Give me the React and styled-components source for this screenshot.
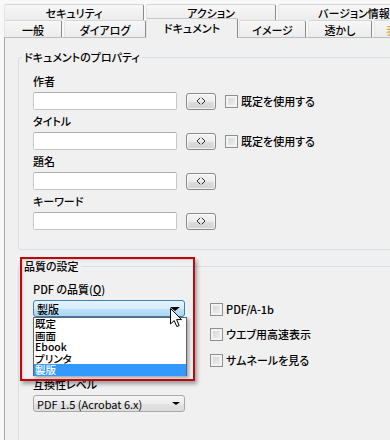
import React from "react";
import styled, { createGlobalStyle, css } from "styled-components";

const FONT = `"Noto Sans CJK JP", "Noto Sans", sans-serif`;

const Global = createGlobalStyle`
  html, body { margin: 0; padding: 0; background: #f0f0f0; }
  #root { width: 390px; height: 440px; overflow: hidden; }
  * { box-sizing: border-box; }
`;

const Window = styled.div`
  width: 390px;
  height: 440px;
  display: flex;
  flex-direction: column;
  background: #f8f8f8;
  font-family: ${FONT};
  font-size: 11px;
  font-weight: 500;
  color: #000;
  font-feature-settings: "palt" 1;
  overflow: hidden;
`;

const TabStrip = styled.div`
  display: flex;
  flex-direction: column;
  padding: 4px 0 0 4px;
`;

const TabRow = styled.div`
  display: flex;
  gap: 2px;
  height: ${(p) => p.$h}px;
`;

const Tab = styled.div`
  flex-shrink: 0;
  width: ${(p) => p.$w}px;
  display: flex;
  align-items: center;
  justify-content: ${(p) => (p.$start ? "flex-start" : "center")};
  white-space: nowrap;
  overflow: hidden;
  border-top: 1px solid #d6d6d6;
  border-left: 1px solid #e4e4e4;
  border-right: 1px solid #8a8a8a;
  border-radius: 2px 2px 0 0;
  background: linear-gradient(#f7f7f7, #ececec);
  line-height: 14px;
  padding-top: 1px;
  ${(p) =>
    p.$active &&
    css`
      position: relative;
      z-index: 2;
      margin: -2px -1px -1px -2px;
      height: calc(100% + 3px);
      background: #f0f0f0;
      border-top: 1px solid #c8c8c8;
      align-items: flex-start;
      padding-top: 2px;
    `}
`;

const FaintGlyph = styled.span`
  color: #e8b450;
  margin-left: 11px;
`;

const Panel = styled.div`
  flex: 1;
  position: relative;
  background: #f0f0f0;
  border-top: 1px solid #bdbdbd;
  border-left: 1px solid #a8a8a8;
  margin-left: 4px;
  padding: 12px 0 0 13px;
  overflow: hidden;
`;

const Group = styled.fieldset`
  margin: ${(p) => (p.$gap ? "9px" : "0")} 0 0 0;
  width: calc(100% + 12px);
  padding: 0;
  min-width: 0;
  border: 1px solid #d5dfe5;
  border-radius: 3px;
  ${(p) => p.$open && css`min-height: 220px;`}
`;

const Legend = styled.legend`
  margin-left: 3px;
  padding: 0 2px;
  line-height: 14px;
  font-size: 11px;
`;

const GroupBody = styled.div`
  padding: ${(p) => p.$top}px 0 16px 14px;
`;

const FieldLabel = styled.div`
  line-height: 16px;
  height: 16px;
  margin-top: ${(p) => p.$mt || 0}px;
`;

const FieldRow = styled.div`
  display: flex;
  align-items: center;
  gap: 9px;
  height: 18px;
  margin: 3px 0;
`;

const TextBox = styled.div`
  width: 144px;
  height: 18px;
  background: #fff;
  border: 1px solid #c4c7cc;
  border-top-color: #abadb3;
  border-radius: 2px;
`;

const SmallButton = styled.div`
  width: 30px;
  height: 17px;
  display: flex;
  align-items: center;
  justify-content: center;
  border: 1px solid #8a8a8a;
  border-radius: 3px;
  background: linear-gradient(#f4f4f4 0%, #ececec 50%, #dedede 51%, #d3d3d3 100%);
  box-shadow: inset 0 0 0 1px rgba(255, 255, 255, 0.7);
`;

const Check = styled.label`
  display: flex;
  align-items: center;
  gap: 3px;
  white-space: nowrap;
  margin-top: ${(p) => p.$mt || 0}px;
`;

const Box = styled.span`
  width: 13px;
  height: 13px;
  flex-shrink: 0;
  border: 1px solid #8e8f8f;
  background: linear-gradient(135deg, #cfd1d4, #f4f4f4);
  box-shadow: inset 0 0 0 2px #f3f3f3;
`;

const QualityLayout = styled.div`
  display: flex;
  align-items: flex-start;
`;

const LeftCol = styled.div`
  display: flex;
  flex-direction: column;
  width: 152px;
`;

const RightCol = styled.div`
  display: flex;
  flex-direction: column;
  margin-left: 25px;
  padding-top: 20px;
`;

const SelectWrap = styled.div`
  position: relative;
  margin-top: 3px;
`;

const Select = styled.div`
  width: 152px;
  height: 17px;
  display: flex;
  align-items: center;
  justify-content: space-between;
  padding: 0 4px 0 3px;
  border-radius: 3px;
  white-space: nowrap;
  ${(p) =>
    p.$active
      ? css`
          border: 1px solid #3c7fb1;
          background: linear-gradient(#e5f4fc 0%, #d6eefb 50%, #bfe3f8 51%, #a9d6f2 100%);
        `
      : css`
          border: 1px solid #a9a9a9;
          background: linear-gradient(#f6f6f6 0%, #ececec 50%, #e2e2e2 51%, #dcdcdc 100%);
          font-weight: 400;
        `}
`;

const Arrow = styled.span`
  width: 0;
  height: 0;
  border-left: ${(p) => p.$s}px solid transparent;
  border-right: ${(p) => p.$s}px solid transparent;
  border-top: ${(p) => p.$s - 1}px solid #000;
`;

const DropList = styled.div`
  position: absolute;
  z-index: 5;
  top: 100%;
  left: 0;
  width: 154px;
  height: 59px;
  background: #fff;
  border: 1px solid #646464;
  box-shadow: 2px 2px 3px rgba(0, 0, 0, 0.3);
  display: flex;
  flex-direction: column;
`;

const Option = styled.div`
  height: ${(p) => (p.$sel ? 12 : 11.5)}px;
  line-height: ${(p) => (p.$sel ? 12 : 11.5)}px;
  font-size: 10.5px;
  padding-left: 1px;
  white-space: nowrap;
  ${(p) =>
    p.$sel &&
    css`
      background: #3399ff;
      color: #fff;
    `}
`;

const Highlight = styled.div`
  position: absolute;
  z-index: 6;
  left: 15px;
  top: 219px;
  width: 175px;
  height: 124px;
  border: 2px solid #c0070d;
  box-shadow: 2px 3px 4px rgba(0, 0, 0, 0.35), inset 1px 1px 2px rgba(0, 0, 0, 0.15);
  pointer-events: none;
`;

const Cursor = styled.svg`
  position: absolute;
  z-index: 7;
  left: 165px;
  top: 270px;
`;

const U = styled.span`
  text-decoration: underline;
`;

const Diamond = () => (
  <svg width="10" height="8" viewBox="0 0 10 8">
    <path d="M4.2 0.8 L1 4 L4.2 7.2 M5.8 0.8 L9 4 L5.8 7.2" fill="none" stroke="#2a2a2a" strokeWidth="1" />
  </svg>
);

const PropertyRow = ({ label, withCheck }) => (
  <>
    <FieldLabel>{label}</FieldLabel>
    <FieldRow>
      <TextBox />
      <SmallButton>
        <Diamond />
      </SmallButton>
      {withCheck && (
        <Check>
          <Box />
          既定を使用する
        </Check>
      )}
    </FieldRow>
  </>
);

export default function App() {
  return (
    <Window>
      <Global />
      <TabStrip>
        <TabRow $h={16}>
          <Tab $w={140}>セキュリティ</Tab>
          <Tab $w={130}>アクション</Tab>
          <Tab $w={152}>バージョン情報</Tab>
        </TabRow>
        <TabRow $h={17}>
          <Tab $w={58}>一般</Tab>
          <Tab $w={82}>ダイアログ</Tab>
          <Tab $w={92} $active>
            ドキュメント
          </Tab>
          <Tab $w={67}>イメージ</Tab>
          <Tab $w={64}>透かし</Tab>
          <Tab $w={60} $start>
            <FaintGlyph>表示</FaintGlyph>
          </Tab>
        </TabRow>
      </TabStrip>
      <Panel>
        <Group>
          <Legend>ドキュメントのプロパティ</Legend>
          <GroupBody $top={9}>
            <PropertyRow label="作者" withCheck />
            <PropertyRow label="タイトル" withCheck />
            <PropertyRow label="題名" />
            <PropertyRow label="キーワード" />
          </GroupBody>
        </Group>
        <Group $gap $open>
          <Legend>品質の設定</Legend>
          <GroupBody $top={8}>
            <QualityLayout>
              <LeftCol>
                <FieldLabel>
                  PDF の品質(<U>Q</U>)
                </FieldLabel>
                <SelectWrap>
                  <Select $active>
                    <span>製版</span>
                    <Arrow $s={5} />
                  </Select>
                  <DropList>
                    <Option>既定</Option>
                    <Option>画面</Option>
                    <Option>Ebook</Option>
                    <Option>プリンタ</Option>
                    <Option $sel>製版</Option>
                  </DropList>
                </SelectWrap>
                <FieldLabel $mt={59}>互換性レベル</FieldLabel>
                <SelectWrap>
                  <Select>
                    <span>PDF 1.5 (Acrobat 6.x)</span>
                    <Arrow $s={4} />
                  </Select>
                </SelectWrap>
              </LeftCol>
              <RightCol>
                <Check>
                  <Box />
                  PDF/A-1b
                </Check>
                <Check $mt={9}>
                  <Box />
                  ウエブ用高速表示
                </Check>
                <Check $mt={10}>
                  <Box />
                  サムネールを見る
                </Check>
              </RightCol>
            </QualityLayout>
          </GroupBody>
        </Group>
        <Highlight />
        <Cursor width="13" height="20" viewBox="0 0 13 20">
          <path
            d="M0.5 0.5 L0.5 16 L4.2 12.6 L6.8 18.6 L9.2 17.6 L6.6 11.6 L11.5 11.6 Z"
            fill="#fff"
            stroke="#000"
            strokeWidth="1"
            strokeLinejoin="miter"
          />
        </Cursor>
      </Panel>
    </Window>
  );
}
